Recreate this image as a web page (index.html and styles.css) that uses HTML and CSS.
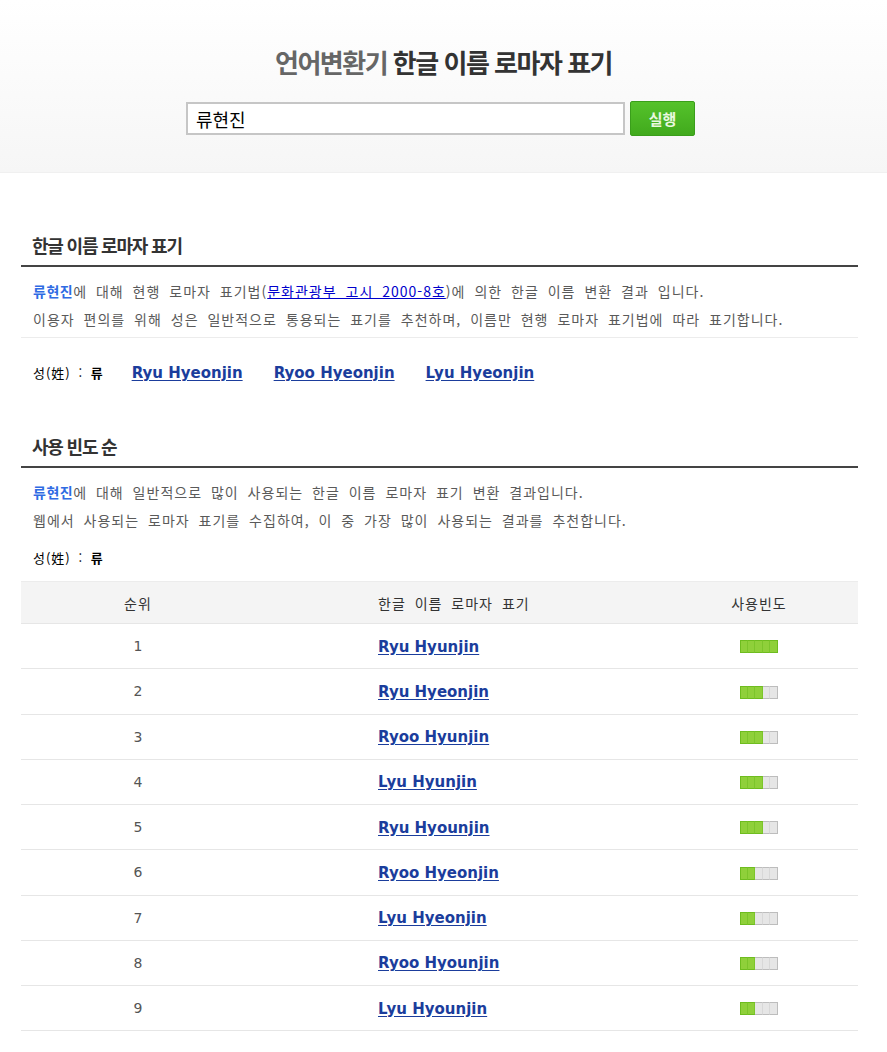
FILE: index.html
```html
<!DOCTYPE html>
<html lang="ko">
<head>
<meta charset="utf-8">
<title>한글 이름 로마자 표기</title>
<link rel="stylesheet" href="styles.css">
</head>
<body>
<header class="top">
  <h1 class="title"><span class="title-light">언어변환기</span> 한글 이름 로마자 표기</h1>
  <form class="search">
    <input class="search-input" type="text" value="류현진">
    <button class="search-btn" type="button">실행</button>
  </form>
</header>

<main class="content">
  <section class="block">
    <h2 class="block-title">한글 이름 로마자 표기</h2>
    <div class="desc desc-ruled">
      <p><b class="name">류현진</b>에 대해 현행 로마자 표기법(<a class="law" href="#">문화관광부 고시 2000-8호</a>)에 의한 한글 이름 변환 결과 입니다.</p>
      <p>이용자 편의를 위해 성은 일반적으로 통용되는 표기를 추천하며, 이름만 현행 로마자 표기법에 따라 표기합니다.</p>
    </div>
    <div class="surname surname-links">
      <span class="surname-label">성(姓) : <b>류</b></span>
      <a class="rom" href="#">Ryu Hyeonjin</a>
      <a class="rom" href="#">Ryoo Hyeonjin</a>
      <a class="rom" href="#">Lyu Hyeonjin</a>
    </div>
  </section>

  <section class="block block-2">
    <h2 class="block-title">사용 빈도 순</h2>
    <div class="desc">
      <p><b class="name">류현진</b>에 대해 일반적으로 많이 사용되는 한글 이름 로마자 표기 변환 결과입니다.</p>
      <p>웹에서 사용되는 로마자 표기를 수집하여, 이 중 가장 많이 사용되는 결과를 추천합니다.</p>
    </div>
    <div class="surname surname-2">
      <span class="surname-label">성(姓) : <b>류</b></span>
    </div>

    <div class="table">
      <div class="row head">
        <div class="c1">순위</div>
        <div class="c2">한글 이름 로마자 표기</div>
        <div class="c3">사용빈도</div>
      </div>
      <div class="row">
        <div class="c1 num">1</div>
        <div class="c2"><a class="rom" href="#">Ryu Hyunjin</a></div>
        <div class="c3"><span class="bar"><i class="on"></i><i class="on"></i><i class="on"></i><i class="on"></i><i class="on"></i></span></div>
      </div>
      <div class="row">
        <div class="c1 num">2</div>
        <div class="c2"><a class="rom" href="#">Ryu Hyeonjin</a></div>
        <div class="c3"><span class="bar"><i class="on"></i><i class="on"></i><i class="on"></i><i></i><i></i></span></div>
      </div>
      <div class="row">
        <div class="c1 num">3</div>
        <div class="c2"><a class="rom" href="#">Ryoo Hyunjin</a></div>
        <div class="c3"><span class="bar"><i class="on"></i><i class="on"></i><i class="on"></i><i></i><i></i></span></div>
      </div>
      <div class="row">
        <div class="c1 num">4</div>
        <div class="c2"><a class="rom" href="#">Lyu Hyunjin</a></div>
        <div class="c3"><span class="bar"><i class="on"></i><i class="on"></i><i class="on"></i><i></i><i></i></span></div>
      </div>
      <div class="row">
        <div class="c1 num">5</div>
        <div class="c2"><a class="rom" href="#">Ryu Hyounjin</a></div>
        <div class="c3"><span class="bar"><i class="on"></i><i class="on"></i><i class="on"></i><i></i><i></i></span></div>
      </div>
      <div class="row">
        <div class="c1 num">6</div>
        <div class="c2"><a class="rom" href="#">Ryoo Hyeonjin</a></div>
        <div class="c3"><span class="bar"><i class="on"></i><i class="on"></i><i></i><i></i><i></i></span></div>
      </div>
      <div class="row">
        <div class="c1 num">7</div>
        <div class="c2"><a class="rom" href="#">Lyu Hyeonjin</a></div>
        <div class="c3"><span class="bar"><i class="on"></i><i class="on"></i><i></i><i></i><i></i></span></div>
      </div>
      <div class="row">
        <div class="c1 num">8</div>
        <div class="c2"><a class="rom" href="#">Ryoo Hyounjin</a></div>
        <div class="c3"><span class="bar"><i class="on"></i><i class="on"></i><i></i><i></i><i></i></span></div>
      </div>
      <div class="row">
        <div class="c1 num">9</div>
        <div class="c2"><a class="rom" href="#">Lyu Hyounjin</a></div>
        <div class="c3"><span class="bar"><i class="on"></i><i class="on"></i><i></i><i></i><i></i></span></div>
      </div>
    </div>
  </section>
</main>
</body>
</html>
```

FILE: styles.css
```css
* { box-sizing: border-box; }

html, body {
  margin: 0;
  padding: 0;
  background: #fff;
  font-family: "Noto Sans CJK KR", "Noto Sans", sans-serif;
  color: #333;
}

.top {
  height: 173px;
  background: linear-gradient(#ffffff, #f6f6f6);
  border-bottom: 1px solid #f0f0f0;
  padding-top: 46px;
}

.title {
  margin: 0;
  text-align: center;
  font-size: 26px;
  line-height: 32px;
  font-weight: 700;
  letter-spacing: -1.5px;
  color: #333;
}
.title-light { color: #666; }

.search {
  display: flex;
  justify-content: center;
  align-items: center;
  gap: 5px;
  margin: 23px 0 0 -6px;
}

.search-input {
  width: 439px;
  height: 33px;
  border: 2px solid #c6c6c6;
  padding: 0 0 0 8px;
  font-family: "Noto Sans CJK KR", sans-serif;
  font-size: 18px;
  color: #000;
  background: #fff;
  outline: none;
}

.search-btn {
  width: 65px;
  height: 35px;
  border: 1px solid #3a9e1b;
  border-radius: 2px;
  background: linear-gradient(#55c22b, #41aa1d);
  color: #eaf8e0;
  font-family: "Noto Sans CJK KR", sans-serif;
  font-size: 15px;
  font-weight: 700;
  padding: 0;
}

.content {
  margin: 0 29px 0 21px;
}

.block-title {
  margin: 60px 0 0;
  padding: 0 0 8px 11px;
  font-size: 18px;
  line-height: 24px;
  font-weight: 700;
  letter-spacing: -1.2px;
  color: #333;
  border-bottom: 2px solid #444;
}
.block-2 .block-title { margin-top: 51px; }

.desc {
  padding: 10px 0 0 12px;
  font-size: 14px;
  line-height: 28px;
  letter-spacing: 1px;
  word-spacing: 4px;
  color: #5a5a5a;
}
.desc p { margin: 0; }
.desc-ruled {
  padding-bottom: 4px;
  border-bottom: 1px solid #ececec;
}

.name { color: #2f6be3; font-weight: 700; letter-spacing: 0.5px; }
.law { color: #0000cc; text-decoration: underline; }

.surname {
  display: flex;
  align-items: baseline;
  padding-left: 12px;
  line-height: 20px;
  font-size: 13px;
  color: #000;
}
.surname-label {
  letter-spacing: 1px;
  word-spacing: 3px;
}
.surname-links { margin-top: 25px; gap: 31px; }
.surname-2 { margin-top: 14px; }
.surname-label b { font-weight: 700; }
.surname-links .surname-label { margin-right: -3px; }

.rom {
  font-family: "DejaVu Sans", Verdana, sans-serif;
  font-size: 15px;
  font-weight: 700;
  color: #1b3d9c;
  text-decoration: underline;
  text-underline-offset: 2px;
}

.table {
  margin-top: 13px;
  border-top: 1px solid #ececec;
}
.row {
  display: grid;
  grid-template-columns: 234px 1fr 200px;
  align-items: center;
  height: 45.25px;
  border-bottom: 1px solid #e6e6e6;
}
.row.head {
  height: 42px;
  background: #f4f4f4;
  font-size: 14px;
  letter-spacing: 1px;
  word-spacing: 4px;
  color: #333;
}
.c1 { text-align: center; }
.c2 { padding-left: 123px; }
.row:not(.head) .c2 { padding-bottom: 3px; }
.c3 { text-align: center; padding-left: 2px; }
.row:not(.head) .c3 { padding-bottom: 4px; }
.num {
  font-family: "DejaVu Sans", Verdana, sans-serif;
  font-size: 14px;
  color: #555;
}

.bar {
  display: inline-flex;
  vertical-align: middle;
  height: 13px;
}
.bar i {
  display: block;
  width: 7.6px;
  height: 13px;
  background: #e6e6e6;
  border-top: 1px solid #bdbdbd;
  border-bottom: 1px solid #bdbdbd;
  border-right: 1px solid #d8d8d8;
}
.bar i:first-child { border-left: 1px solid #bdbdbd; }
.bar i:last-child { border-right: 1px solid #bdbdbd; }
.bar i.on {
  background: #8fd03a;
  border-top-color: #6ebc1f;
  border-bottom-color: #6ebc1f;
  border-right-color: #7cc52b;
}
.bar i.on:first-child { border-left-color: #6ebc1f; }
.bar i.on:last-child { border-right-color: #6ebc1f; }
```
